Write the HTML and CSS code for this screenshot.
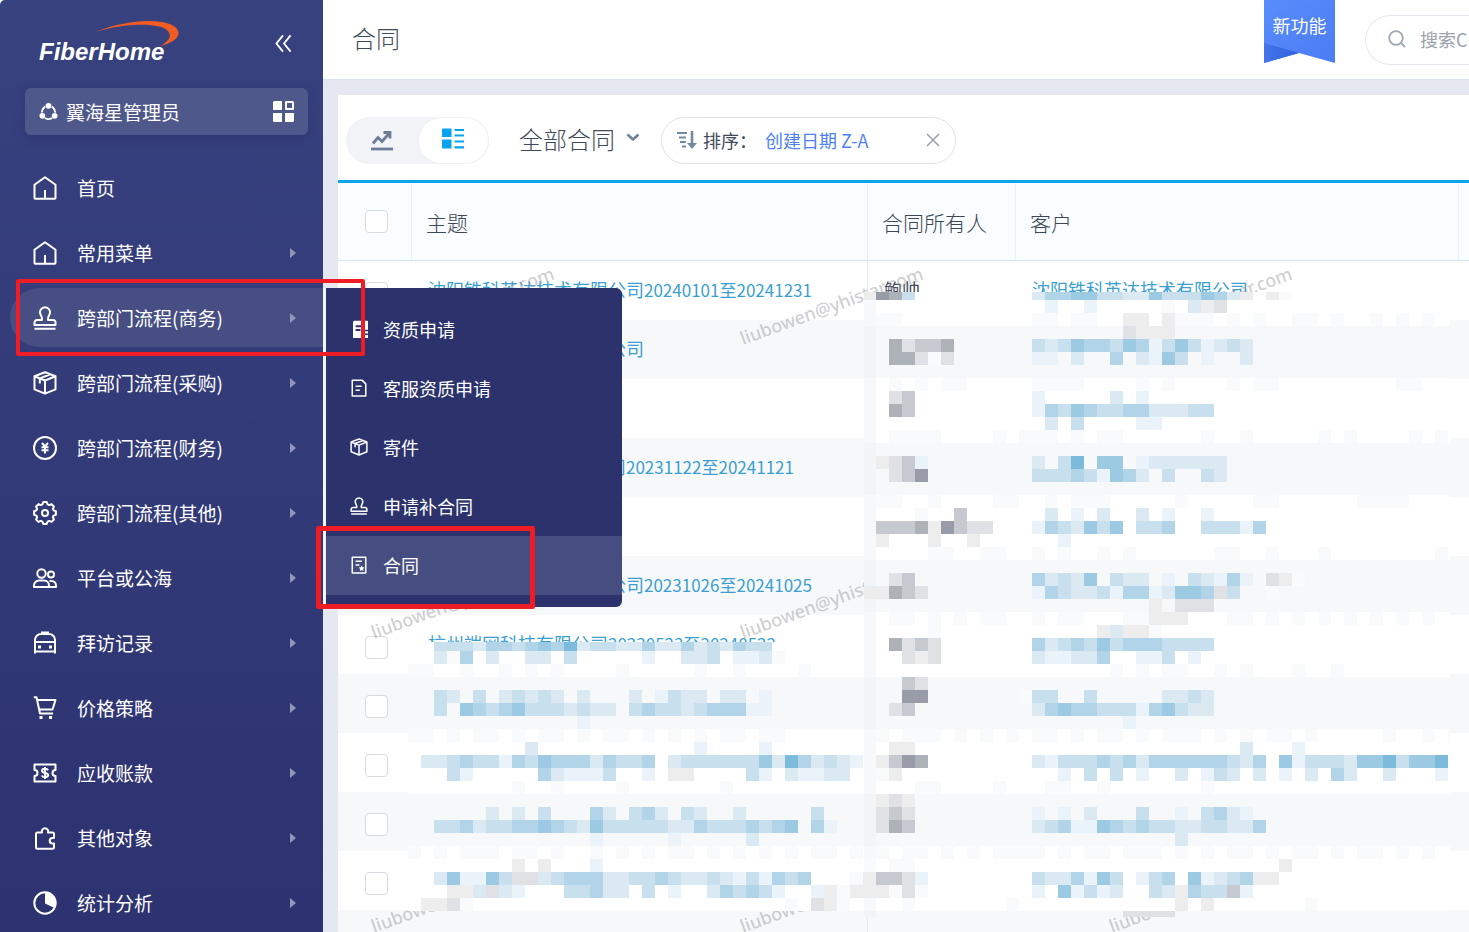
FILE: index.html
```html
<!DOCTYPE html>
<html lang="zh-CN">
<head>
<meta charset="utf-8">
<title>合同</title>
<link rel="stylesheet" href="styles.css">
</head>
<body>
<svg class="sprite" aria-hidden="true">
  <symbol id="i-home" viewBox="0 0 24 24"><path d="M1.500 8.800 12 1.300l10.500 7.500v13.100a.8.8 0 0 1-.8.8H2.300a.8.8 0 0 1-.8-.8ZM12 14v8"/></symbol>
  <symbol id="i-stamp" viewBox="0 0 24 24"><path d="M12 1.300a5 5 0 0 1 4.600 7c-.8 1.500-1.900 2.700-1.600 5.700h5a2.500 2.500 0 0 1 2.500 2.500V19h-21v-2.500A2.500 2.500 0 0 1 4 14h5c.3-3-.8-4.200-1.600-5.700a5 5 0 0 1 4.600-7ZM1.500 22.700h21"/></symbol>
  <symbol id="i-box" viewBox="0 0 24 24"><path d="M12 1.300 22.500 5.300v13L12 22.700 1.500 18.300v-13ZM1.500 5.300 12 9.500l10.500-4.200M12 9.500v13.200M17.300 3.300 6.800 7.400v5"/></symbol>
  <symbol id="i-yen" viewBox="0 0 24 24"><circle cx="12" cy="12" r="11"/><path d="m9 7 3 3.500L15 7M8.500 11.200h7M8.500 14.200h7M12 10.500v7"/></symbol>
  <symbol id="i-gear" viewBox="0 0 24 24"><path d="M9.400 3.400 10.300 1.100h3.400l.9 2.300 1.600.7 2.300-1 2.400 2.400-1 2.300.7 1.600 2.300.9v3.400l-2.300.9-.7 1.600 1 2.300-2.400 2.400-2.300-1-1.600.7-.9 2.300h-3.400l-.9-2.300-1.600-.7-2.300 1-2.400-2.400 1-2.300-.7-1.600-2.300-.9v-3.400l2.300-.9.7-1.600-1-2.300 2.400-2.400 2.300 1Z"/><circle cx="12" cy="12" r="3"/></symbol>
  <symbol id="i-people" viewBox="0 0 24 24"><circle cx="8.500" cy="7.500" r="4.200"/><circle cx="18" cy="8.500" r="3"/><path d="M1 21v-1.500a5 5 0 0 1 5-5h5a5 5 0 0 1 5 5V21ZM16.500 15h2a4.500 4.500 0 0 1 4.500 4.500V21h-7"/></symbol>
  <symbol id="i-bus" viewBox="0 0 24 24"><path d="M8 1.500h8M2 22.500V9a6 6 0 0 1 6-6h8a6 6 0 0 1 6 6v13.500M2 11h20M2 20.500h20"/><path class="solid" d="M5 14.500h3v3H5zM16 14.500h3v3h-3z"/></symbol>
  <symbol id="i-cart" viewBox="0 0 24 24"><path d="M.8 1.300h2.700L7 17.500h13M4.300 4H22.500l-3 9.500H6.200"/><path class="solid" d="M6.500 20h3v3h-3zM16 20h3v3h-3z"/></symbol>
  <symbol id="i-ticket" viewBox="0 0 24 24"><path d="M1.500 3.500h21V9a3 3 0 0 0 0 6v5.500h-21V15a3 3 0 0 0 0-6ZM15 9.200c-.5-1-1.500-1.400-3-1.400-1.700 0-3 .7-3 2 0 3.200 6.200 1.300 6.200 4.300 0 1.400-1.400 2.100-3.200 2.100-1.600 0-2.800-.6-3.200-1.700M12 6v12"/></symbol>
  <symbol id="i-puzzle" viewBox="0 0 24 24"><path d="M4.500 6.500H9a3.200 3.200 0 1 1 6 0h4.500A1.500 1.500 0 0 1 21 8v4h-1.500a2.800 2.800 0 0 0 0 5.600H21v3.600a1.500 1.500 0 0 1-1.500 1.500h-15A1.500 1.500 0 0 1 3 21.200V8a1.500 1.500 0 0 1 1.500-1.500Z"/></symbol>
  <symbol id="i-pie" viewBox="0 0 24 24"><circle cx="12" cy="12" r="10.700"/><path class="solid" d="M12 12.500V1.500a10.500 10.500 0 0 1 9.500 15.500Z"/></symbol>
  <symbol id="i-doc" viewBox="0 0 24 24"><path d="M3 1.500h13L21 6.500v16H3ZM7.500 9.500h8M7.500 15h5.500"/></symbol>
  <symbol id="i-contract" viewBox="0 0 24 24"><path d="M3 1.500h18v21H3ZM7.500 7h8.500M7.500 12h5"/><path class="solid" d="m15.500 12.500 1.300 2.500 2.700.4-2 1.900.5 2.700-2.500-1.300-2.400 1.300.4-2.700-2-1.900 2.800-.4Z"/></symbol>
  <symbol id="i-docfill" viewBox="0 0 24 24"><path class="solid" fill-rule="evenodd" d="M6 1h17a2 2 0 0 1 2 2v10h-6a3 3 0 0 0-3 3v8H4V3a2 2 0 0 1 2-2Zm1.500 6v2.500h11V7Zm0 5v2.500H14V12ZM17 15h7v3h-7zM17 20h7v4h-7z"/></symbol>
  <symbol id="i-arrow" viewBox="0 0 6 10"><path class="solid" d="M0 0 6 5 0 10Z"/></symbol>
</svg>

<div class="app">
  <aside class="sidebar">
    <div class="brand">
      <div class="logo">
        <span>FiberHome</span>
        <svg class="swoosh" viewBox="0 0 90 28" aria-hidden="true"><path d="M0 13C26 3 52-1 71 2c14 2 21 9 16 16-3 4-9 7-17 9 8-5 12-10 8-15C71 2 32 3 0 13Z"/></svg>
      </div>
      <button class="collapse" aria-label="收起"><svg viewBox="0 0 18 19"><path d="M8.500 1 1.500 9.500l7 8.500M16.500 1l-7 8.500 7 8.500"/></svg></button>
    </div>
    <button class="role">
      <svg class="role-icon" viewBox="0 0 20 20"><circle cx="10" cy="11" r="7"/><path class="gap" d="M10 4h0M3.500 14.500h0M16.500 14.500h0"/><path class="dots" d="M10 4h0M3.500 14.500h0M16.500 14.500h0"/></svg>
      <span>翼海星管理员</span>
      <svg class="role-grid" viewBox="0 0 21 21"><path class="solid" d="M1.500 0H9v9H0V1.500A1.500 1.500 0 0 1 1.500 0ZM0 12h9v9H1.500A1.500 1.500 0 0 1 0 19.500ZM12 12h9v7.500a1.500 1.500 0 0 1-1.500 1.500H12Z"/><path d="M13 1h6.500a.5.500 0 0 1 .5.500V8h-7Z"/></svg>
    </button>
    <ul class="nav">
      <li><a href="#"><svg><use href="#i-home"/></svg><span>首页</span></a></li>
      <li><a href="#"><svg><use href="#i-home"/></svg><span>常用菜单</span><svg class="more"><use href="#i-arrow"/></svg></a></li>
      <li class="active"><a href="#"><svg><use href="#i-stamp"/></svg><span>跨部门流程(商务)</span><svg class="more"><use href="#i-arrow"/></svg></a>
        <ul class="submenu">
          <li><a href="#"><svg><use href="#i-docfill"/></svg>资质申请</a></li>
          <li><a href="#"><svg><use href="#i-doc"/></svg>客服资质申请</a></li>
          <li><a href="#"><svg><use href="#i-box"/></svg>寄件</a></li>
          <li><a href="#"><svg><use href="#i-stamp"/></svg>申请补合同</a></li>
          <li class="current"><a href="#"><svg><use href="#i-contract"/></svg>合同</a></li>
        </ul>
      </li>
      <li><a href="#"><svg><use href="#i-box"/></svg><span>跨部门流程(采购)</span><svg class="more"><use href="#i-arrow"/></svg></a></li>
      <li><a href="#"><svg><use href="#i-yen"/></svg><span>跨部门流程(财务)</span><svg class="more"><use href="#i-arrow"/></svg></a></li>
      <li><a href="#"><svg><use href="#i-gear"/></svg><span>跨部门流程(其他)</span><svg class="more"><use href="#i-arrow"/></svg></a></li>
      <li><a href="#"><svg><use href="#i-people"/></svg><span>平台或公海</span><svg class="more"><use href="#i-arrow"/></svg></a></li>
      <li><a href="#"><svg><use href="#i-bus"/></svg><span>拜访记录</span><svg class="more"><use href="#i-arrow"/></svg></a></li>
      <li><a href="#"><svg><use href="#i-cart"/></svg><span>价格策略</span><svg class="more"><use href="#i-arrow"/></svg></a></li>
      <li><a href="#"><svg><use href="#i-ticket"/></svg><span>应收账款</span><svg class="more"><use href="#i-arrow"/></svg></a></li>
      <li><a href="#"><svg><use href="#i-puzzle"/></svg><span>其他对象</span><svg class="more"><use href="#i-arrow"/></svg></a></li>
      <li><a href="#"><svg><use href="#i-pie"/></svg><span>统计分析</span><svg class="more"><use href="#i-arrow"/></svg></a></li>
    </ul>
    <div class="mark mark-menu"></div>
    <div class="mark mark-item"></div>
  </aside>

  <main class="main">
    <header class="topbar">
      <h1>合同</h1>
      <a class="ribbon" href="#">
        <svg viewBox="0 0 71 63" aria-hidden="true"><defs><linearGradient id="rb" x2="1" y2="1"><stop stop-color="#588dfd"/><stop offset="1" stop-color="#4a7cf3"/></linearGradient><linearGradient id="rf" x2="1"><stop stop-color="#4574ea"/><stop offset="1" stop-color="#2f62de"/></linearGradient></defs><path fill="url(#rb)" d="M0 0h71v63L35 53 0 63Z"/><path fill="url(#rf)" d="M0 43 35 53 0 63Z"/></svg>
        <span>新功能</span>
      </a>
      <label class="search">
        <svg viewBox="0 0 18 18" aria-hidden="true"><circle cx="8" cy="8" r="6.800"/><path d="m13 13 4 4"/></svg>
        <input type="text" placeholder="搜索CRM" aria-label="搜索CRM">
      </label>
    </header>

    <section class="panel">
      <div class="toolbar">
        <div class="views">
          <button aria-label="图表"><svg viewBox="0 0 22 20"><path d="m2 13 5-6 4 4 7-8M12.500 2H19v6"/><path d="M0 18.500h22"/></svg></button>
          <button class="on" aria-label="列表"><svg viewBox="0 0 22 21"><path class="solid" d="M0 1.500A1 1 0 0 1 1 .5h8.500V9H0ZM0 11.500h9.500v9H1a1 1 0 0 1-1-1Z"/><path d="M12.500 2H22M12.500 7.500H22M12.500 13.500H22M12.500 19.300H22"/></svg></button>
        </div>
        <button class="scope">全部合同<svg viewBox="0 0 13 8"><path d="m1 1.500 5.500 5 5.500-5"/></svg></button>
        <div class="sort">
          <svg class="sort-icon" viewBox="0 0 20 18"><path d="M0 2h10M2 6.500h7M3 11h6M5 15.500h4" stroke-width="1.800"/><path d="M15 0v14" stroke-width="2.600"/><path class="solid" d="M10 12h10l-5 6Z"/></svg>
          <span class="sort-label">排序：</span>
          <a href="#">创建日期 Z-A</a>
          <button aria-label="清除"><svg viewBox="0 0 14 14"><path d="m1 1 12 12M13 1 1 13"/></svg></button>
        </div>
      </div>

      <div class="records">
        <table>
          <colgroup><col class="c-check"><col class="c-subject"><col class="c-owner"><col class="c-client"><col></colgroup>
          <thead><tr><th><input type="checkbox" aria-label="全选"></th><th>主题</th><th>合同所有人</th><th>客户</th><th></th></tr></thead>
          <tbody>
            <tr><td><input type="checkbox" aria-label="选择"></td><td><a href="#">沈阳铁科英达技术有限公司<span class="period">20240101至20241231</span></a></td><td>鲍帅</td><td><a href="#">沈阳铁科英达技术有限公司</a></td><td></td></tr>
            <tr><td><input type="checkbox" aria-label="选择"></td><td><a href="#">沈阳铁科英达技术有限公司</a></td><td></td><td></td><td></td></tr>
            <tr><td><input type="checkbox" aria-label="选择"></td><td></td><td></td><td></td><td></td></tr>
            <tr><td><input type="checkbox" aria-label="选择"></td><td><a href="#">沈阳铁科技术有限公司司<span class="period">20231122至20241121</span></a></td><td></td><td></td><td></td></tr>
            <tr><td><input type="checkbox" aria-label="选择"></td><td></td><td></td><td></td><td></td></tr>
            <tr><td><input type="checkbox" aria-label="选择"></td><td><a href="#">沈阳铁科英达技术有限公司<span class="period">20231026至20241025</span></a></td><td></td><td></td><td></td></tr>
            <tr><td><input type="checkbox" aria-label="选择"></td><td><a href="#">杭州端网科技有限公司<span class="period">20230523至20240522</span></a></td><td></td><td></td><td></td></tr>
            <tr><td><input type="checkbox" aria-label="选择"></td><td></td><td></td><td></td><td></td></tr>
            <tr><td><input type="checkbox" aria-label="选择"></td><td></td><td></td><td></td><td></td></tr>
            <tr><td><input type="checkbox" aria-label="选择"></td><td></td><td></td><td></td><td></td></tr>
            <tr><td><input type="checkbox" aria-label="选择"></td><td></td><td></td><td></td><td></td></tr>
            <tr><td></td><td></td><td></td><td></td><td></td></tr>
          </tbody>
        </table>
        <svg class="overlay" aria-hidden="true">
          <g class="watermark">
            <text transform="translate(36 162) rotate(-20)">liubowen@yhistar.com</text>
            <text transform="translate(405 162) rotate(-20)">liubowen@yhistar.com</text>
            <text transform="translate(774 162) rotate(-20)">liubowen@yhistar.com</text>
            <text transform="translate(36 456) rotate(-20)">liubowen@yhistar.com</text>
            <text transform="translate(405 456) rotate(-20)">liubowen@yhistar.com</text>
            <text transform="translate(36 750) rotate(-20)">liubowen@yhistar.com</text>
            <text transform="translate(405 750) rotate(-20)">liubowen@yhistar.com</text>
            <text transform="translate(774 750) rotate(-20)">liubowen@yhistar.com</text>
          </g>
          <g id="mosaic" shape-rendering="crispEdges"></g>
        </svg>
      </div>
    </section>
  </main>
</div>
<script src="mosaic.js"></script>
</body>
</html>
```

FILE: styles.css
```css
* { box-sizing: border-box; }

body {
  margin: 0;
  height: 100vh;
  overflow: hidden;
  background: #fff;
  color: #3f4a5a;
  font-family: "Noto Sans CJK SC", "Noto Sans", sans-serif;
  font-size: 18px;
}

a { color: inherit; text-decoration: none; }
button { border: 0; padding: 0; background: none; color: inherit; font: inherit; }
ul { margin: 0; padding: 0; list-style: none; }
svg { flex: none; fill: none; stroke: currentColor; stroke-linejoin: round; }
.solid { fill: currentColor; stroke: none; }
.sprite { display: none; }

.app { display: flex; height: 100%; }

/* Sidebar */
.sidebar {
  position: relative;
  z-index: 2;
  flex: none;
  width: 323px;
  border-radius: 5px 0 0 0;
  background: linear-gradient(#38427f, #323a78 50%, #2d3270);
  color: #fff;
}

.brand {
  display: flex;
  justify-content: space-between;
  height: 88px;
  padding: 20px 31px 0 39px;
}

.logo { position: relative; width: 142px; padding-top: 16px; }
.logo span {
  font: italic bold 24px/32px "Liberation Sans Narrow", "Liberation Sans", sans-serif;
}
.swoosh {
  position: absolute;
  top: 0;
  right: 0;
  width: 89px;
  height: 27px;
  fill: #f25c22;
  stroke: none;
}

.collapse { height: 47px; }
.collapse svg { display: block; width: 17px; height: 19px; stroke-width: 2; }

.role {
  display: flex;
  align-items: center;
  width: 283px;
  height: 47px;
  margin: 0 auto 23px 25px;
  padding: 0 14px;
  border-radius: 6px;
  background: #4f588b;
  box-shadow: 0 3px 12px rgba(30, 36, 90, .3);
  font-size: 19px;
}
.role span { flex: 1; margin-left: 8px; text-align: left; }
.role-icon { width: 19px; height: 19px; stroke-width: 2; stroke-linecap: round; }
.role-icon .gap { stroke: #4f588b; stroke-width: 7; }
.role-icon .dots { stroke-width: 6; }
.role-grid { width: 21px; height: 21px; stroke-width: 2; }

.nav > li { position: relative; margin: 0 0 6px 10px; }
.nav > li > a {
  display: flex;
  align-items: center;
  height: 59px;
  padding: 0 27px 0 23px;
  border-radius: 30px 0 0 30px;
  font-size: 19px;
}
.nav svg { width: 24px; height: 24px; overflow: visible; stroke-width: 2; }
.nav span { flex: 1; margin-left: 20px; }
.nav .more { width: 6px; height: 10px; color: #9297b9; }
.nav > .active > a { background: #464e83; }

.submenu {
  position: absolute;
  top: 0;
  left: 100%;
  width: 299px;
  padding: 12px 0;
  border-left: 3px solid #f3f4f9;
  border-radius: 0 6px 6px 0;
  background: #2b326c;
}
.submenu a {
  display: flex;
  align-items: center;
  gap: 15px;
  height: 59px;
  padding: 0 0 2px 24px;
  font-size: 18px;
}
.submenu svg { width: 18px; height: 18px; stroke-width: 2; }
.submenu .current { background: #464d80; }

.mark { position: absolute; border: 4px solid #ee1c25; border-radius: 2px; pointer-events: none; }
.mark-menu { left: 16px; top: 279px; width: 349px; height: 77px; }
.mark-item { left: 316px; top: 526px; width: 219px; height: 83px; border-width: 5px; }

/* Main column */
.main { display: flex; flex: 1; flex-direction: column; min-width: 0; background: #e5e8f0; }

.topbar {
  display: flex;
  flex: none;
  height: 80px;
  padding-left: 29px;
  border-bottom: 1px solid #dce4ee;
  background: #fff;
}
.topbar h1 { flex: 1; margin: 0; font-size: 24px; font-weight: 300; line-height: 76px; }

.ribbon { position: relative; width: 71px; height: 63px; margin-right: 30px; color: #fff; text-align: center; }
.ribbon svg { position: absolute; inset: 0; width: 71px; height: 63px; stroke: none; }
.ribbon span { position: relative; line-height: 50px; }

.search {
  display: flex;
  align-items: center;
  gap: 14px;
  width: 104px;
  height: 50px;
  margin-top: 15px;
  padding: 0 0 2px 22px;
  border: 1px solid #e6e8ef;
  border-right: 0;
  border-radius: 25px 0 0 25px;
  color: #a0a8b5;
}
.search svg { width: 18px; height: 18px; stroke-width: 1.800; }
.search input { flex: 1; min-width: 0; border: 0; padding: 0; outline: 0; background: none; font: inherit; }
.search input::placeholder { color: #9aa2ae; }

.panel { display: flex; flex: 1; flex-direction: column; min-height: 0; margin: 15px 0 0 15px; background: #fff; }

.toolbar {
  display: flex;
  flex: none;
  align-items: center;
  height: 88px;
  padding: 5px 0 0 8px;
  border-bottom: 3px solid #0ca5ea;
}

.views { display: flex; width: 143px; height: 47px; border-radius: 24px; background: #f1f3f7; }
.views button { display: grid; place-items: center; width: 72px; height: 47px; border-radius: 24px; color: #6b7c98; }
.views .on { border: 1px solid #eff1f5; background: #fff; color: #06a4f0; }
.views svg { width: 22px; height: 21px; stroke-width: 2.800; stroke-linejoin: miter; }
.views .on svg { margin-bottom: 4px; stroke-width: 2.200; }

.scope { display: flex; align-items: center; margin-left: 30px; padding-bottom: 3px; font-size: 24px; font-weight: 300; }
.scope svg { width: 14px; height: 8px; margin: 0 0 4px 11px; stroke: #6f8299; stroke-width: 2.600; }

.sort {
  display: flex;
  align-items: center;
  width: 295px;
  height: 47px;
  margin-left: 21px;
  padding: 0 15px;
  border: 1px solid #dfe2ea;
  border-radius: 24px;
}
.sort-icon { width: 20px; height: 18px; color: #7389a0; }
.sort-label { width: 62px; margin-left: 6px; white-space: nowrap; }
.sort a { flex: 1; color: #4f80f5; }
.sort button svg { display: block; width: 14px; height: 14px; color: #9aa3b3; stroke-width: 1.600; }

/* Records */
.records { position: relative; flex: 1; min-height: 0; overflow: hidden; }

table { width: 100%; table-layout: fixed; border-collapse: separate; border-spacing: 0; }
.c-check { width: 74px; }
.c-subject { width: 456px; }
.c-owner { width: 148px; }
.c-client { width: 443px; }

th {
  height: 78px;
  padding: 0 14px;
  border-right: 1px solid #e8f1f9;
  border-bottom: 1px solid #d9e5f1;
  background: #f9fdff;
  color: #3c4654;
  font-size: 21px;
  font-weight: 300;
  text-align: left;
}
th:last-child { border-right: 0; }
td { height: 59px; padding: 0 16px 3px; white-space: nowrap; }
td:nth-child(2) { border-right: 1px solid #dfeaf4; }
tr > :first-child { padding: 0 0 0 3px; }
tbody tr > :first-child { padding-top: 5px; }
tbody tr:nth-child(even) { background: #f6f8fa; }
td a { color: #3b9fd2; }
.period { font-size: 17px; }

input[type="checkbox"] {
  display: block;
  width: 23px;
  height: 23px;
  margin: 0 auto;
  appearance: none;
  border: 1px solid #d9dbde;
  border-radius: 4px;
  background: #fff;
}

.overlay { position: absolute; inset: 0; width: 100%; height: 100%; stroke: none; pointer-events: none; }
.watermark { fill: #909399; fill-opacity: .44; font: 500 18px "Noto Sans", sans-serif; }

.m-w { fill: #fff; }
.m-g { fill: #f6f8fa; }
.m-line { fill: #eaf1f6; fill-opacity: .45; }
.m-a { fill: #eaf3f9; }
.m-b { fill: #dae9f2; }
.m-c { fill: #c8dfed; }
.m-d { fill: #b1d4e8; }
.m-e { fill: #9bcae2; }
.m-f { fill: #7dbbdd; }
.m-1 { fill: #f9fafb; }
.m-2 { fill: #ededee; }
.m-3 { fill: #dfe1e5; }
.m-4 { fill: #c6cad0; }
.m-5 { fill: #adb2b8; }
.m-6 { fill: #979ca8; }
```

FILE: mosaic.js
```javascript
// Privacy mosaic over the record text. Each string is one line of 13px cells;
// a letter or digit names a shade in the stylesheet, a dot leaves the cell empty.
const CELL = 13;

const blocks = [
  {
    x: 526, y: 109, width: 586, height: 625, originY: 104, line: true,
    bands: [143, 260, 377, 494, 611, 728],
    rows: [
      '265c.........bddeeccbbecccedb2.21',
      '..............a..a.....1.b23',
      '.11..........11.11..22.2111.1.1..11.1..1.1.1',
      '....................3222',
      '..53445......cbceddcedacecabcb',
      '..55313......aa.b..d.baec.a..b',
      '',
      '..1.1.11.....1111....1.1....1.11.........11',
      '..34.........a.....b.a',
      '..54.........adcedccddbbbcc',
      '..............b.c....aa',
      '..1111....1.111.1.11......1..1.....1.1....1.1',
      '',
      '.234a........b.cf.ee.abbbbbb',
      '..346........cccdcaedb.c..cb',
      '',
      '.11..1....11..1.111.....1.....11......1111',
      '....1..4......b.a.b..b.a..a',
      '.444526433...adcbece.ccd..cccad',
      '.2...2..2......a',
      '.....11..11..1.1..1.1......11..1...1........1',
      '',
      '..34.........dbcbe.cbb.a.cbada.321',
      '22543........adcbbcaddabeed3c..1',
      '......................2.333',
      '..11.1.1.11..1.11...11222...11.1.1.1.1.1.1.1',
      '.....1............2b221',
      '..5343.......dbcdcecdddcccc',
      '...323.......baabbd..aac.a',
      '...................1.1.11..1.1...1..1',
      '...43',
      '...66.......1cc..c.....bbcb',
      '..34.........bdeddcccadecbb',
      '....................a',
      '.1.111.1.1.1.11.1.11.1.111.1.1.11.1.....1..1.1',
      '..22.........................b...a',
      '.2465........bacccdcdbddddddcbd.eacccbeefceef',
      '.12............a.c.c.a..b.acb.b.a.b.db..b...a',
      '....11....1...11..1.......1',
      '.232',
      '.343.........a.a.b...c..a.cdba',
      '.354.........bcdaaedcdccbbccbbd',
      '........................b',
      '.1.11.1.1.1111.1.11.111.1.1.11.1.11.1.11.1.1',
      '1.11............................2',
      '2443a........cbbdaec.acd.eabcd22',
      '22131........a.eacab..cb2dcc4a',
      '...1.......1............2.2.......1',
      '....................3333'
    ]
  },
  {
    x: 70, y: 459, width: 456, height: 269, originY: 455,
    bands: [494, 611],
    rows: [
      '..cccbddcdedfbccbbdbbdbcbdcc',
      '..b1d.b..bb.c.....a..bbc.aab1',
      '11..1..1.1.1....1.....1..1....1',
      '',
      '..cb.c.bcbcb.b...b.acbb.bb.a',
      '..c.edcdecccbcbb.cdccbcdddaa',
      '.............a',
      '11.1.11.1.11.1.11.1.1.1.11.11',
      '.........b............a....a',
      '.bbcdccadcedddbdccd.bccccccebfdbcba',
      '...ca.....dbaaac..a.22....ca.baabb',
      '........1..1....1.......1',
      '',
      '......b.b.c...db.cdb.cb..b.....c',
      '..ccdbccddedcbecccccbbdcccdcde.da',
      '..............a.....a.....b',
      '1.1.111.11.1..1.1.1.11.1.1.1.1.11.1',
      '........2.2...a',
      '..beaaec33bcdddbbccdcbbcbacadcd...12',
      '...22b3ba...ccdbb.c.a..bdcdca..a2122',
      '.2231........................1.321'
    ]
  }
];

const group = document.getElementById('mosaic');

function rect(x, y, width, height, shade, block) {
  const right = Math.min(x + width, block.x + block.width);
  const bottom = Math.min(y + height, block.y + block.height);
  const left = Math.max(x, block.x);
  const top = Math.max(y, block.y);
  const el = document.createElementNS('http://www.w3.org/2000/svg', 'rect');
  el.setAttribute('x', left);
  el.setAttribute('y', top);
  el.setAttribute('width', Math.max(0, right - left));
  el.setAttribute('height', Math.max(0, bottom - top));
  el.setAttribute('class', 'm-' + shade);
  group.appendChild(el);
}

blocks.forEach((block) => {
  rect(block.x, block.y, block.width, block.height, 'w', block);
  block.bands.forEach((y) => rect(block.x, y, block.width, 52, 'g', block));
  if (block.line) rect(block.x, block.y, 12, block.height, 'line', block);
  const startX = block.line ? 525 : 70;
  block.rows.forEach((row, r) => {
    [...row].forEach((shade, c) => {
      if (shade !== '.') rect(startX + c * CELL, block.originY + r * CELL, CELL, CELL, shade, block);
    });
  });
});
```
